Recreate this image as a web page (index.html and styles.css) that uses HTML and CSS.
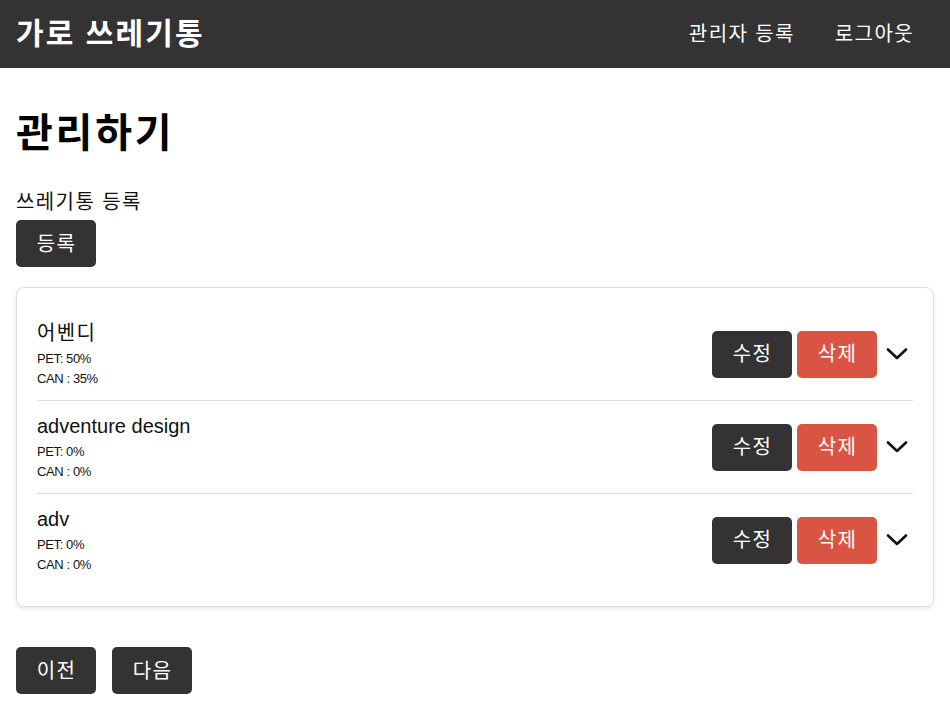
FILE: index.html
```html
<!DOCTYPE html>
<html lang="ko">
<head>
<meta charset="utf-8">
<title>가로 쓰레기통</title>
<link rel="stylesheet" href="styles.css">
</head>
<body>
<header class="topbar">
  <div class="brand ko">가로 쓰레기통</div>
  <nav class="nav">
    <a class="nav-link ko" href="#">관리자 등록</a>
    <a class="nav-link ko" href="#">로그아웃</a>
  </nav>
</header>
<main class="main">
  <h1 class="page-title ko">관리하기</h1>
  <div class="section-label ko">쓰레기통 등록</div>
  <button class="btn ko">등록</button>
  <div class="card">
    <div class="item">
      <div class="info">
        <div class="name ko">어벤디</div>
        <div class="stat">PET: 50%</div>
        <div class="stat">CAN : 35%</div>
      </div>
      <div class="actions">
        <button class="btn ko">수정</button>
        <button class="btn btn-danger ko">삭제</button>
        <svg class="chevron" width="22" height="14" viewBox="0 0 22 14"><polyline points="2,2.5 11,11 20,2.5" fill="none" stroke="#111" stroke-width="2.6" stroke-linecap="round" stroke-linejoin="round"/></svg>
      </div>
    </div>
    <div class="item">
      <div class="info">
        <div class="name">adventure design</div>
        <div class="stat">PET: 0%</div>
        <div class="stat">CAN : 0%</div>
      </div>
      <div class="actions">
        <button class="btn ko">수정</button>
        <button class="btn btn-danger ko">삭제</button>
        <svg class="chevron" width="22" height="14" viewBox="0 0 22 14"><polyline points="2,2.5 11,11 20,2.5" fill="none" stroke="#111" stroke-width="2.6" stroke-linecap="round" stroke-linejoin="round"/></svg>
      </div>
    </div>
    <div class="item">
      <div class="info">
        <div class="name">adv</div>
        <div class="stat">PET: 0%</div>
        <div class="stat">CAN : 0%</div>
      </div>
      <div class="actions">
        <button class="btn ko">수정</button>
        <button class="btn btn-danger ko">삭제</button>
        <svg class="chevron" width="22" height="14" viewBox="0 0 22 14"><polyline points="2,2.5 11,11 20,2.5" fill="none" stroke="#111" stroke-width="2.6" stroke-linecap="round" stroke-linejoin="round"/></svg>
      </div>
    </div>
  </div>
  <div class="pager">
    <button class="btn ko">이전</button>
    <button class="btn ko">다음</button>
  </div>
</main>
</body>
</html>
```

FILE: styles.css
```css
* { box-sizing: border-box; }
html, body {
  margin: 0;
  padding: 0;
  background: #fff;
  color: #111;
  font-family: "Liberation Sans", "Noto Sans CJK KR", sans-serif;
}
.ko { letter-spacing: 0.07em; }
.topbar {
  height: 68px;
  background: #333;
  color: #fff;
  display: flex;
  align-items: center;
  justify-content: space-between;
  padding: 0 16px;
}
.brand {
  font-size: 30px;
  font-weight: 700;
  line-height: 36px;
}
.nav { display: flex; }
.nav-link {
  color: #fff;
  text-decoration: none;
  font-size: 20px;
  line-height: 24px;
  padding: 0 20px;
}
.main {
  padding: 20px 16px 0;
}
.page-title {
  margin: 21px 0 0;
  font-size: 40px;
  line-height: 48px;
  font-weight: 700;
  color: #000;
}
.section-label {
  margin-top: 33px;
  font-size: 20px;
  line-height: 24px;
}
.btn {
  display: inline-block;
  margin-top: 6px;
  width: 80px;
  height: 47px;
  border: 0;
  border-radius: 5px;
  background: #333;
  color: #fff;
  font-family: "Liberation Sans", "Noto Sans CJK KR", sans-serif;
  font-size: 20px;
  line-height: 24px;
  padding: 0 0 0 1px;
  cursor: pointer;
}
.btn-danger { background: #da5443; }
.card {
  margin-top: 20px;
  border: 1px solid #ddd;
  border-radius: 8px;
  box-shadow: 0 2px 4px rgba(0, 0, 0, 0.1);
  padding: 20px;
}
.item {
  display: flex;
  align-items: center;
  justify-content: space-between;
  height: 93px;
  border-bottom: 1px solid #ddd;
}
.item:last-child {
  border-bottom: 0;
  height: 92px;
}
.info {
  align-self: flex-start;
  margin-top: 13px;
}
.name {
  font-size: 20px;
  line-height: 24px;
  margin-bottom: 4px;
}
.stat {
  font-size: 13px;
  line-height: 20px;
  letter-spacing: -0.4px;
}
.actions {
  display: flex;
  align-items: center;
  gap: 5px;
}
.actions .btn { margin-top: 0; }
.chevron {
  margin: 0 5px 0 4px;
}
.pager {
  display: flex;
  gap: 16px;
  margin-top: 40px;
}
.pager .btn { margin-top: 0; }
```
